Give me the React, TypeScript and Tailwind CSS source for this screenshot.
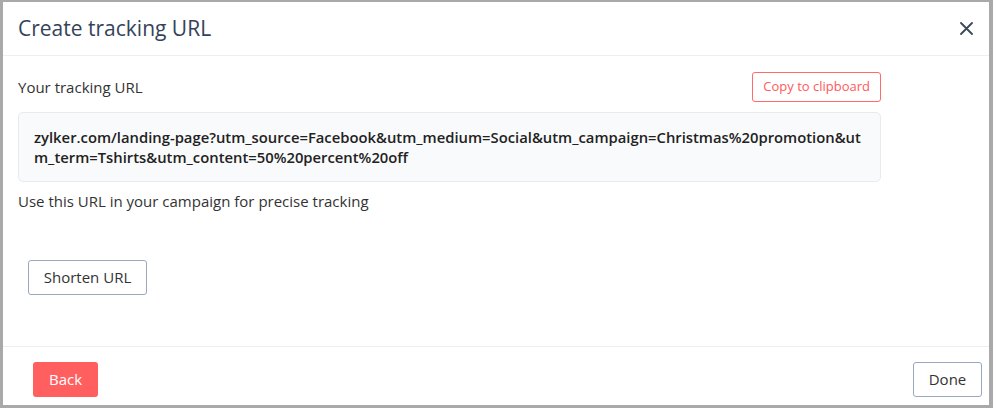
export default function App() {
  const url =
    "zylker.com/landing-page?utm_source=Facebook&utm_medium=Social&utm_campaign=Christmas%20promotion&utm_term=Tshirts&utm_content=50%20percent%20off";

  return (
    <div className="w-[993px] h-[408px] bg-[#a9a9a9] pl-[3px] pt-[2px] pr-[4px] pb-[3px] font-['Open_Sans',sans-serif]">
      <div className="w-full h-full bg-white flex flex-col">
        {/* Header */}
        <div className="h-[54px] flex items-center justify-between pl-[15px] pr-[16px] border-b border-[#eceef1]">
          <h1 className="text-[21px] text-[#34435a]">Create tracking URL</h1>
          <button className="text-[#3b4656]">
            <svg width="13" height="13" viewBox="0 0 13 13" fill="none" stroke="currentColor" strokeWidth="1.8" strokeLinecap="round">
              <path d="M1 1L12 12M12 1L1 12" />
            </svg>
          </button>
        </div>

        {/* Body */}
        <div className="flex-1 pl-[15px] pr-[108px] pt-[16px]">
          <div className="flex items-center justify-between">
            <p className="text-[15px] text-[#333]">Your tracking URL</p>
            <button className="h-[30px] px-[10px] border border-[#ff6b6b] rounded-[3px] text-[13px] text-[#ff5a5a]">
              Copy to clipboard
            </button>
          </div>
          <div className="mt-[10px] bg-[#f9fafb] border border-[#e7ebf0] rounded-[5px] px-[15px] py-[14px] h-[70px]">
            <p className="text-[14.8px] font-semibold text-[#222] leading-[20px] break-all">{url}</p>
          </div>
          <p className="mt-[8px] text-[15px] text-[#333]">Use this URL in your campaign for precise tracking</p>
          <button className="mt-[47px] ml-[10px] h-[35px] w-[119px] border border-[#9aa8bf] rounded-[3px] text-[15px] text-[#333]">
            Shorten URL
          </button>
        </div>

        {/* Footer */}
        <div className="h-[59px] border-t border-[#eceef1] flex items-start justify-between pt-[15px] pl-[30px] pr-[7px]">
          <button className="h-[35px] w-[65px] bg-[#ff5f5f] rounded-[3px] text-[15px] text-white">Back</button>
          <button className="h-[35px] w-[69px] border border-[#9aa8bf] rounded-[3px] text-[15px] text-[#333]">Done</button>
        </div>
      </div>
    </div>
  );
}
